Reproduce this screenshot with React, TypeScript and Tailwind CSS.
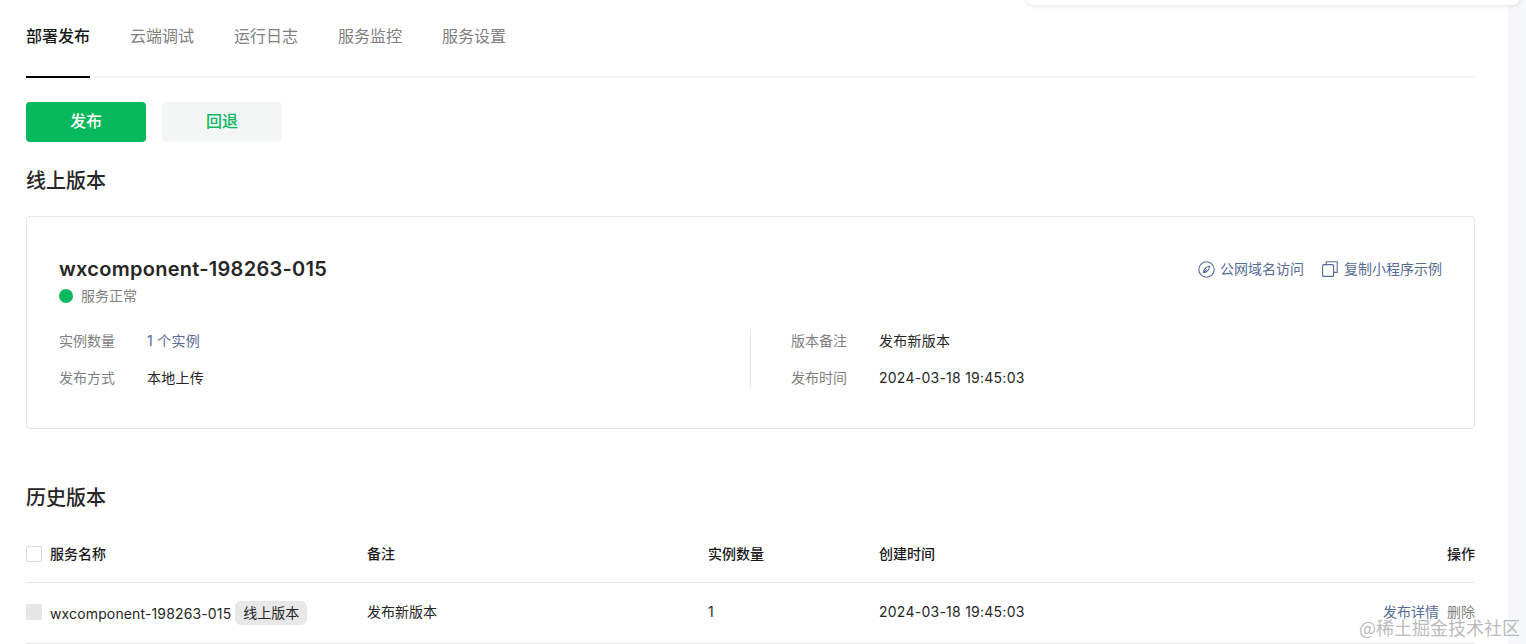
import React from "react";

const tabs = ["部署发布", "云端调试", "运行日志", "服务监控", "服务设置"];

const CompassIcon = () => (
  <svg width="17" height="17" viewBox="0 0 17 17" fill="none" stroke="#576b95" strokeWidth="1.1">
    <circle cx="8.5" cy="8.5" r="7.7" />
    <path d="M11.6 5.3C8.6 5.6 6 7.6 5.4 11.6 8.6 11.4 11 9.2 11.6 5.3Z" />
    <path d="M5.4 11.6 8.6 8.3" />
  </svg>
);

const CopyIcon = () => (
  <svg width="16" height="16" viewBox="0 0 16 16" fill="none" stroke="#576b95" strokeWidth="1.1">
    <rect x="0.6" y="3.6" width="11" height="11.8" rx="1" />
    <path d="M4.2 3.4V0.8H15.2V11.4H11.8" />
  </svg>
);

const InfoRow = ({ label, value, link }: { label: string; value: string; link?: boolean }) => (
  <div className="flex h-[37px] items-center text-sm leading-5 tracking-[0.25px]">
    <span className="w-[88px] shrink-0 tracking-normal text-[#7f7f7f]">{label}</span>
    <span className={link ? "text-[#576b95]" : "text-[#262626]"}>{value}</span>
  </div>
);

export default function App() {
  return (
    <div
      className="relative flex h-[644px] w-[1526px] overflow-hidden bg-white"
      style={{ fontFamily: '"Inter", "Noto Sans CJK SC", sans-serif' }}
    >
      {/* popup edge peeking in at the top */}
      <div className="absolute right-[6px] top-[-10px] h-[15px] w-[494px] rounded-lg bg-white shadow-[0_1px_4px_rgba(0,0,0,0.12)]" />

      <main className="w-[1508px] shrink-0 pl-[26px] pr-[33px]">
        <nav className="flex h-[78px] gap-10 border-b-2 border-[#f5f5f5]">
          {tabs.map((tab, i) => (
            <div
              key={tab}
              className={
                i === 0
                  ? "mb-[-2px] h-[78px] border-b-2 border-black pt-[24px] text-base leading-6 font-medium text-[#191919]"
                  : "pt-[24px] text-base leading-6 text-[#7f7f7f]"
              }
            >
              {tab}
            </div>
          ))}
        </nav>

        <div className="mt-6 flex gap-4">
          <button className="h-10 w-[120px] rounded bg-[#07b85c] pb-[2px] text-base font-medium text-white">发布</button>
          <button className="h-10 w-[120px] rounded bg-[#f4f6f6] pb-[2px] text-base font-medium text-[#07b85c]">回退</button>
        </div>

        <h2 className="mt-[25px] h-[28px] text-xl leading-7 font-medium text-[#262626]">线上版本</h2>

        <section className="mt-[21px] h-[213px] rounded border border-[#e5e5e5] px-8 pt-[38px]">
          <div className="flex items-start justify-between">
            <div>
              <div className="text-[20px] leading-7 font-semibold tracking-[0.27px] text-[#262626]">wxcomponent-198263-015</div>
              <div className="mt-[3px] flex items-center gap-2 text-sm leading-5 text-[#7f7f7f]">
                <span className="h-3.5 w-3.5 rounded-full bg-[#07b85c]" />
                服务正常
              </div>
            </div>
            <div className="flex items-center gap-[18px] pt-[4px] text-sm leading-5 text-[#576b95]">
              <span className="flex items-center gap-[5px]">
                <CompassIcon />
                公网域名访问
              </span>
              <span className="flex items-center gap-[6px]">
                <CopyIcon />
                复制小程序示例
              </span>
            </div>
          </div>

          <div className="mt-[16px] flex">
            <div className="w-[691px]">
              <InfoRow label="实例数量" value="1 个实例" link />
              <InfoRow label="发布方式" value="本地上传" />
            </div>
            <div className="mt-[8px] h-[58px] w-px bg-[#e5e5e5]" />
            <div className="pl-10">
              <InfoRow label="版本备注" value="发布新版本" />
              <InfoRow label="发布时间" value="2024-03-18 19:45:03" />
            </div>
          </div>
        </section>

        <h2 className="mt-[55px] h-[28px] text-xl leading-7 font-medium text-[#262626]">历史版本</h2>

        <div className="mt-[21px] flex h-[50px] items-center border-b border-[#e5e5e5] pb-[8px] text-sm font-medium text-[#191919]">
          <div className="flex w-[341px] items-center gap-2">
            <span className="h-4 w-4 rounded-[2px] border border-[#d9d9d9] bg-white" />
            服务名称
          </div>
          <div className="w-[341px]">备注</div>
          <div className="w-[171px]">实例数量</div>
          <div className="w-[300px]">创建时间</div>
          <div className="flex-1 text-right">操作</div>
        </div>

        <div className="flex h-[61px] items-center border-b border-[#e5e5e5] pb-[2px] text-sm text-[#262626]">
          <div className="flex w-[341px] items-center gap-2">
            <span className="h-4 w-4 rounded-[2px] bg-[#e6e6e6]" />
            <span className="mt-[2px] flex items-center gap-1">
              <span className="pt-[2px] tracking-[0.14px]">wxcomponent-198263-015</span>
              <span className="rounded-md bg-[#e8e8e8] px-2 py-[2px] leading-5">线上版本</span>
            </span>
          </div>
          <div className="w-[341px]">发布新版本</div>
          <div className="w-[171px]">1</div>
          <div className="w-[300px] tracking-[0.25px]">2024-03-18 19:45:03</div>
          <div className="flex flex-1 justify-end gap-2">
            <span className="text-[#576b95]">发布详情</span>
            <span className="text-[#7f7f7f]">删除</span>
          </div>
        </div>
      </main>

      <aside className="flex-1 bg-[#f5f7f8]" />

      {/* site watermark */}
      <div
        className="absolute bottom-[5px] right-[6px] text-[18px] leading-6 text-[#a8a8a8]/80"
        style={{ fontFamily: '"Noto Sans CJK SC", serif' }}
      >
        @稀土掘金技术社区
      </div>
    </div>
  );
}
